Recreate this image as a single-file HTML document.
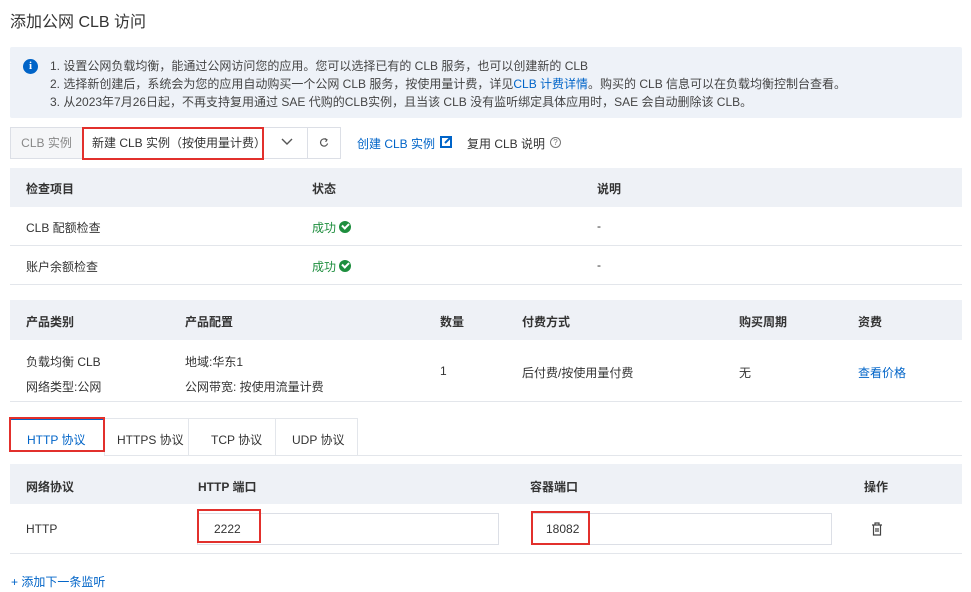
<!DOCTYPE html>
<html><head><meta charset="utf-8"><style>
*{box-sizing:border-box;margin:0;padding:0}
body{width:971px;height:592px;background:#fff;font-family:"Liberation Sans","Noto Sans CJK SC",sans-serif;font-size:12px;color:#333;position:relative;overflow:hidden}
.a{position:absolute;white-space:nowrap}
.hd{position:absolute;left:10px;width:952px;background:#eef1f6;}
.ln{position:absolute;left:10px;width:952px;height:1px;background:#e3e6eb}
.b{font-weight:bold;color:#333}
.blue{color:#0064c8}
.ok{color:#1e8e3e}
.chk{display:inline-block;width:12px;height:12px;border-radius:50%;background:#1e8e3e;vertical-align:-1px;margin-left:3px;position:relative}
.chk:after{content:"";position:absolute;left:3px;top:2px;width:5px;height:3px;border-left:2px solid #fff;border-bottom:2px solid #fff;transform:rotate(-45deg)}
.red{position:absolute;border:2px solid #e2302c}
</style></head><body>
<div class="a" style="left:10px;top:8px;font-size:16px;color:#333">添加公网 CLB 访问</div>

<div class="a" style="left:10px;top:47px;width:952px;height:71px;background:#eef2f8;border-radius:2px"></div>
<div class="a" style="left:23px;top:59px;width:15px;height:15px;border-radius:50%;background:#0064c8;color:#fff;font-size:11px;font-weight:bold;text-align:center;line-height:15px;font-family:'Liberation Serif',serif">i</div>
<div class="a" style="left:50px;top:57px;line-height:18px;color:#444">1. 设置公网负载均衡，能通过公网访问您的应用。您可以选择已有的 CLB 服务，也可以创建新的 CLB<br>2. 选择新创建后，系统会为您的应用自动购买一个公网 CLB 服务，按使用量计费，详见<span class="blue">CLB 计费详情</span>。购买的 CLB 信息可以在负载均衡控制台查看。<br>3. 从2023年7月26日起，不再支持复用通过 SAE 代购的CLB实例，且当该 CLB 没有监听绑定具体应用时，SAE 会自动删除该 CLB。</div>

<div class="a" style="left:10px;top:127px;width:331px;height:32px;border:1px solid #dcdfe6"></div>
<div class="a" style="left:11px;top:128px;width:71px;height:30px;background:#f5f6f8;color:#888;line-height:30px;text-align:center">CLB 实例</div>
<div class="a" style="left:307px;top:127px;width:1px;height:32px;background:#dcdfe6"></div>
<div class="a" style="left:92px;top:128px;line-height:30px;color:#333">新建 CLB 实例（按使用量计费）</div>
<svg class="a" style="left:280px;top:137px" width="14" height="10"><path d="M2 2l5 5 5-5" fill="none" stroke="#555" stroke-width="1.4"/></svg>
<svg class="a" style="left:318px;top:137px" width="12" height="12"><path d="M8.5 2.8A3.6 3.6 0 1 0 9.6 6.5M6.8 1.5L9 2.8 7.6 4.8" fill="none" stroke="#555" stroke-width="1.2"/></svg>
<div class="red" style="left:82px;top:127px;width:182px;height:33px"></div>
<div class="a blue" style="left:357px;top:135px">创建 CLB 实例</div>
<svg class="a" style="left:440px;top:136px" width="12" height="12"><rect x="1" y="1" width="10" height="10" fill="none" stroke="#0064c8" stroke-width="2"/><path d="M5 7l5-5M7 1h4v4" stroke="#0064c8" stroke-width="2" fill="none"/></svg>
<div class="a" style="left:467px;top:135px">复用 CLB 说明</div>
<div class="a" style="left:550px;top:137px;width:11px;height:11px;border:1px solid #777;border-radius:50%;font-size:8px;line-height:9px;text-align:center;color:#777">?</div>

<div class="hd" style="top:168px;height:39px"></div>
<div class="a b" style="left:26px;top:180px">检查项目</div>
<div class="a b" style="left:312px;top:180px">状态</div>
<div class="a b" style="left:597px;top:180px">说明</div>
<div class="ln" style="top:245px"></div><div class="ln" style="top:284px"></div>
<div class="a" style="left:26px;top:219px">CLB 配额检查</div>
<div class="a ok" style="left:312px;top:219px">成功<span class="chk"></span></div>
<div class="a" style="left:597px;top:219px">-</div>
<div class="a" style="left:26px;top:258px">账户余额检查</div>
<div class="a ok" style="left:312px;top:258px">成功<span class="chk"></span></div>
<div class="a" style="left:597px;top:258px">-</div>

<div class="hd" style="top:300px;height:40px"></div>
<div class="a b" style="left:26px;top:313px">产品类别</div>
<div class="a b" style="left:185px;top:313px">产品配置</div>
<div class="a b" style="left:440px;top:313px">数量</div>
<div class="a b" style="left:522px;top:313px">付费方式</div>
<div class="a b" style="left:739px;top:313px">购买周期</div>
<div class="a b" style="left:858px;top:313px">资费</div>
<div class="a" style="left:26px;top:350px;line-height:25px">负载均衡 CLB<br>网络类型:公网</div>
<div class="a" style="left:185px;top:350px;line-height:25px">地域:华东1<br>公网带宽: 按使用流量计费</div>
<div class="a" style="left:440px;top:364px">1</div>
<div class="a" style="left:522px;top:364px">后付费/按使用量付费</div>
<div class="a" style="left:739px;top:364px">无</div>
<div class="a blue" style="left:858px;top:364px">查看价格</div>
<div class="ln" style="top:401px"></div>

<div class="a" style="left:10px;top:455px;width:952px;height:1px;background:#e3e6eb"></div>
<div class="a" style="left:104px;top:418px;width:254px;height:38px;border:1px solid #e3e6eb;border-bottom:none"></div>
<div class="a" style="left:188px;top:418px;width:1px;height:37px;background:#e3e6eb"></div>
<div class="a" style="left:275px;top:418px;width:1px;height:37px;background:#e3e6eb"></div>
<div class="a" style="left:10px;top:418px;width:94px;height:38px;background:#fff;border-top:2px solid #0064c8"></div>
<div class="a blue" style="left:27px;top:431px">HTTP 协议</div>
<div class="a" style="left:117px;top:431px">HTTPS 协议</div>
<div class="a" style="left:211px;top:431px">TCP 协议</div>
<div class="a" style="left:292px;top:431px">UDP 协议</div>
<div class="red" style="left:9px;top:417px;width:96px;height:35px"></div>

<div class="hd" style="top:464px;height:40px"></div>
<div class="a b" style="left:26px;top:478px">网络协议</div>
<div class="a b" style="left:198px;top:478px">HTTP 端口</div>
<div class="a b" style="left:530px;top:478px">容器端口</div>
<div class="a b" style="left:864px;top:478px">操作</div>
<div class="a" style="left:26px;top:522px">HTTP</div>
<div class="a" style="left:197px;top:513px;width:302px;height:32px;border:1px solid #dcdfe6"></div>
<div class="a" style="left:531px;top:513px;width:301px;height:32px;border:1px solid #dcdfe6"></div>
<div class="a" style="left:214px;top:522px">2222</div>
<div class="a" style="left:546px;top:522px">18082</div>
<div class="red" style="left:197px;top:509px;width:64px;height:34px"></div>
<div class="red" style="left:531px;top:511px;width:59px;height:34px"></div>
<svg class="a" style="left:871px;top:522px" width="12" height="14"><path d="M1 3h10M4 3V1h4v2M2.5 3v10h7V3M5 6v4M7 6v4" fill="none" stroke="#444" stroke-width="1.2"/></svg>
<div class="ln" style="top:553px"></div>
<div class="a blue" style="left:11px;top:573px">+ 添加下一条监听</div>
</body></html>
